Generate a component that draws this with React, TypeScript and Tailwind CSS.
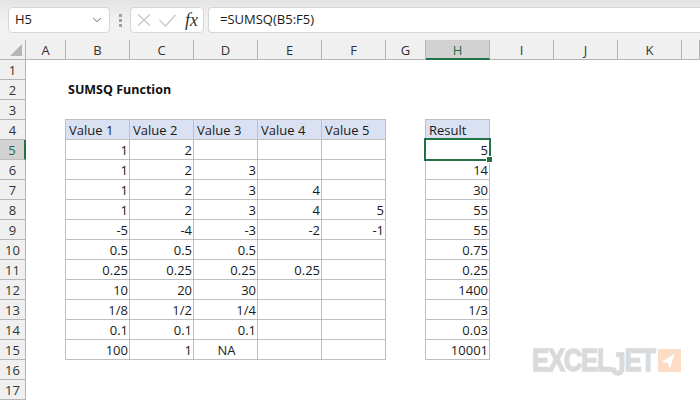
import { ChevronDown } from 'lucide-react';

const columns = [
  { name: 'A', width: 'w-[40px]' },
  { name: 'B', width: 'w-[64px]' },
  { name: 'C', width: 'w-[64px]' },
  { name: 'D', width: 'w-[64px]' },
  { name: 'E', width: 'w-[64px]' },
  { name: 'F', width: 'w-[64px]' },
  { name: 'G', width: 'w-[40px]' },
  { name: 'H', width: 'w-[64px]' },
  { name: 'I', width: 'w-[64px]' },
  { name: 'J', width: 'w-[64px]' },
  { name: 'K', width: 'w-[64px]' },
  { name: '', width: 'w-[18px]' },
];

const tableRows = [
  ['1', '2', '', '', '', '5'],
  ['1', '2', '3', '', '', '14'],
  ['1', '2', '3', '4', '', '30'],
  ['1', '2', '3', '4', '5', '55'],
  ['-5', '-4', '-3', '-2', '-1', '55'],
  ['0.5', '0.5', '0.5', '', '', '0.75'],
  ['0.25', '0.25', '0.25', '0.25', '', '0.25'],
  ['10', '20', '30', '', '', '1400'],
  ['1/8', '1/2', '1/4', '', '', '1/3'],
  ['0.1', '0.1', '0.1', '', '', '0.03'],
  ['100', '1', 'NA', '', '', '10001'],
];

const headers = ['Value 1', 'Value 2', 'Value 3', 'Value 4', 'Value 5'];

const Cell = ({ text, head, center }: { text: string; head?: boolean; center?: boolean }) => (
  <div
    className={`w-[64px] h-[20px] shrink-0 border-r border-b border-[#bfbfbf] leading-[20px] pl-[3px] pr-[1px] ${
      head ? 'bg-[#d9e1f2] text-left' : center ? 'text-center' : 'text-right'
    }`}
  >
    {text}
  </div>
);

const RowHead = ({ n }: { n: number }) => (
  <div
    className={`w-[26px] h-[20px] shrink-0 border-r border-b text-center leading-[20px] text-[13px] ${
      n === 5
        ? 'bg-[#d2d2d2] border-b-[#bdbdbd] border-r-2 border-r-[#217346] text-[#1e6b41]'
        : 'bg-[#f0f0f0] border-[#b5b5b5] text-[#333]'
    }`}
  >
    {n}
  </div>
);

export default function App() {
  return (
    <div className="w-[700px] h-[400px] overflow-hidden bg-white text-[13px] text-[#1a1a1a] font-['Open_Sans','Noto_Sans',sans-serif]">
      {/* Formula bar */}
      <div className="h-[40px] flex items-start pt-[7px] bg-gradient-to-b from-[#e4e4e4] via-[#f1f1f1] to-[#f1f1f1]">
        <div className="ml-[8px] w-[102px] h-[26px] bg-white border border-[#d6d6d6] rounded-[4px] flex items-center justify-between pl-[6px] pr-[5px] text-[13px]">
          H5
          <ChevronDown size={14} strokeWidth={1.5} className="text-[#555]" />
        </div>
        <div className="ml-[8px] h-[26px] w-[4px] flex flex-col items-center justify-center gap-[2px]">
          <span className="w-[3px] h-[3px] bg-[#a0a0a0]" />
          <span className="w-[3px] h-[3px] bg-[#a0a0a0]" />
          <span className="w-[3px] h-[3px] bg-[#a0a0a0]" />
        </div>
        <div className="ml-[8px] w-[74px] h-[26px] bg-white border border-[#d6d6d6] rounded-[4px] flex items-center pl-[6px]">
          <svg width="14" height="14" viewBox="0 0 14 14" fill="none" stroke="#c8c8c8" strokeWidth="1.3">
            <path d="M1 1.5 L13 12.5 M13 1.5 L1 12.5" />
          </svg>
          <svg width="17" height="13" viewBox="0 0 17 13" fill="none" stroke="#c8c8c8" strokeWidth="1.3" className="ml-[8px]">
            <path d="M0.5 6 L6.5 12 L16.5 1" />
          </svg>
          <span className="ml-[9px] font-['Liberation_Serif',serif] italic text-[18px] text-[#333] leading-none">
            fx
          </span>
        </div>
        <div className="ml-[4px] flex-1 h-[26px] bg-white border border-[#d6d6d6] border-r-0 rounded-l-[4px] flex items-center pl-[11px] text-[13px]">
          =SUMSQ(B5:F5)
        </div>
      </div>

      {/* Column headers */}
      <div className="flex h-[20px] bg-[#f0f0f0]">
        <div className="w-[26px] h-[20px] shrink-0 border-r border-b border-[#b5b5b5] flex items-end justify-end pr-[3px] pb-[3px]">
          <div className="w-0 h-0 border-l-[12px] border-l-transparent border-b-[12px] border-b-[#b5b5b5]" />
        </div>
        {columns.map((col) => (
          <div
            key={col.name}
            className={`${col.width} h-[20px] shrink-0 text-center leading-[20px] text-[13px] border-r ${
              col.name === 'H'
                ? 'bg-[#d2d2d2] border-b-2 border-b-[#217346] border-r-[#b5b5b5] text-[#1e6b41]'
                : 'border-b border-[#b5b5b5] text-[#333]'
            }`}
          >
            {col.name}
          </div>
        ))}
      </div>

      {/* Sheet */}
      <div className="relative">
        {[1, 2, 3].map((n) => (
          <div key={n} className="flex h-[20px]">
            <RowHead n={n} />
            {n === 2 && (
              <div className="ml-[42px] font-bold leading-[20px] text-[12.5px] text-[#111]">SUMSQ Function</div>
            )}
            {n === 3 && (
              <>
                <div className="ml-[39px] w-[321px] h-[20px] border-b border-[#bfbfbf]" />
                <div className="ml-[39px] w-[65px] h-[20px] border-b border-[#bfbfbf]" />
              </>
            )}
          </div>
        ))}

        {/* Header row */}
        <div className="flex h-[20px]">
          <RowHead n={4} />
          <div className="w-[40px] shrink-0 border-r border-[#bfbfbf]" />
          {headers.map((h) => (
            <Cell key={h} text={h} head />
          ))}
          <div className="w-[40px] shrink-0 border-r border-[#bfbfbf]" />
          <Cell text="Result" head />
        </div>

        {/* Data rows */}
        {tableRows.map((row, i) => (
          <div key={i} className="flex h-[20px]">
            <RowHead n={i + 5} />
            <div className="w-[40px] shrink-0 border-r border-[#bfbfbf]" />
            {row.slice(0, 5).map((v, j) => (
              <Cell key={j} text={v} center={v === 'NA'} />
            ))}
            <div className="w-[40px] shrink-0 border-r border-[#bfbfbf]" />
            <Cell text={row[5]} />
          </div>
        ))}

        {[16, 17].map((n) => (
          <div key={n} className="flex h-[20px]">
            <RowHead n={n} />
          </div>
        ))}

        {/* Selected cell H5 */}
        <div className="absolute left-[424px] top-[78px] w-[67px] h-[23px] border-2 border-[#217346]">
          <div className="absolute right-[-3px] bottom-[-3px] w-[5px] h-[5px] bg-[#217346] outline outline-1 outline-white" />
        </div>

        {/* Watermark logo */}
        <div className="absolute left-[532px] top-[289px] flex items-start">
          <span className="w-[124px] block origin-left scale-x-[0.8] whitespace-nowrap font-['Liberation_Sans',sans-serif] font-bold text-[32px] leading-[23px] tracking-[-1.5px] text-[#d9dbdb] [-webkit-text-stroke:1.4px_#d9dbdb]">
            EXCEL<span className="relative top-[4px]">J</span>ET
          </span>
          <svg width="23" height="23" viewBox="0 0 23 23" className="ml-[2px]">
            <rect width="23" height="23" fill="#fcdcc4" />
            <path d="M16.5 5 L3 13 L10 14 L12 20 Z" fill="#fff" />
          </svg>
        </div>
      </div>
    </div>
  );
}
